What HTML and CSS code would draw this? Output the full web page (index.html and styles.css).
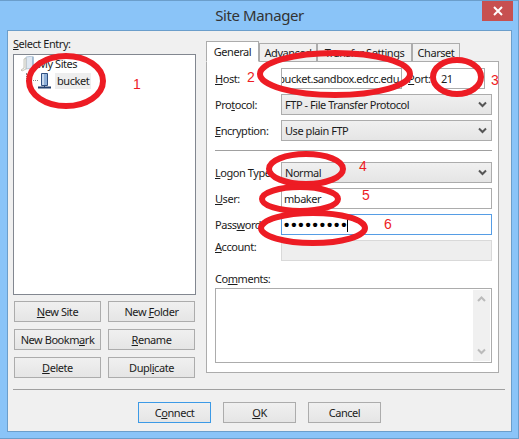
FILE: index.html
```html
<!DOCTYPE html>
<html>
<head>
  <title>Site Manager</title>
  <link rel="stylesheet" href="styles.css">
</head>
<body>
  <div class="window">
    <!-- Title bar -->
    <div class="titlebar">
      <span class="title">Site Manager</span>
      <div class="close-btn">
        <svg width="10" height="10" viewBox="0 0 10 10"><path d="M1 1L9 9M9 1L1 9" stroke="#fff" stroke-width="2"/></svg>
      </div>
    </div>

    <div class="client">
      <div class="main">
        <!-- Left column: site tree and its buttons -->
        <div class="left-col">
          <div class="select-label"><u>S</u>elect Entry:</div>
          <div class="tree">
            <div class="tree-row root-row">
              <svg class="tree-icon" width="14" height="16" viewBox="0 0 14 16">
                <path d="M5 1L12 0V12L5 13Z" fill="#dfe8f2" stroke="#a9bccf" stroke-width="0.8"/>
                <path d="M3 3L5 2V13L1 15L0 14L3 12Z" fill="#f4f4f0" stroke="#b9b9ae" stroke-width="0.8"/>
                <path d="M12 1V12" stroke="#7f9fc2"/>
              </svg>
              <span class="tree-text">My Sites</span>
            </div>
            <div class="tree-row site-row">
              <span class="tree-dots"></span>
              <svg class="tree-icon" width="13" height="16" viewBox="0 0 13 16">
                <path d="M3.5 0.5H9.5V12.5H3.5Z" fill="#8fb0d8" stroke="#2f4f80"/>
                <path d="M5 1V12" stroke="#dce8f6" stroke-width="1.5"/>
                <path d="M6.5 12.5V14" stroke="#2f4f80"/>
                <path d="M0 14.5H13" stroke="#23406e" stroke-width="2"/>
              </svg>
              <span class="tree-text selected">bucket</span>
            </div>
          </div>
          <div class="left-buttons">
            <div class="btn"><span><u>N</u>ew Site</span></div>
            <div class="btn"><span>New <u>F</u>older</span></div>
            <div class="btn"><span>New Bookm<u>a</u>rk</span></div>
            <div class="btn"><span><u>R</u>ename</span></div>
            <div class="btn"><span><u>D</u>elete</span></div>
            <div class="btn"><span>Dupl<u>i</u>cate</span></div>
          </div>
        </div>

        <!-- Right column: tabs and form -->
        <div class="right-col">
          <div class="tabs">
            <div class="tab active">General</div>
            <div class="tab tab-advanced">Advanced</div>
            <div class="tab tab-transfer">Transfer Settings</div>
            <div class="tab tab-charset">Charset</div>
          </div>
          <div class="panel">
            <div class="form-row">
              <label><u>H</u>ost:</label>
              <div class="field host"><span>bucket.sandbox.edcc.edu</span></div>
              <label class="port-label"><u>P</u>ort:</label>
              <div class="field port">21</div>
            </div>
            <div class="form-row">
              <label>Pro<u>t</u>ocol:</label>
              <div class="select"><span>FTP - File Transfer Protocol</span><svg width="9" height="7" viewBox="0 0 9 7"><path d="M1 1.5L4.5 5L8 1.5" fill="none" stroke="#555" stroke-width="2"/></svg></div>
            </div>
            <div class="form-row">
              <label><u>E</u>ncryption:</label>
              <div class="select"><span>Use plain FTP</span><svg width="9" height="7" viewBox="0 0 9 7"><path d="M1 1.5L4.5 5L8 1.5" fill="none" stroke="#555" stroke-width="2"/></svg></div>
            </div>
            <div class="form-sep"></div>
            <div class="form-row">
              <label><u>L</u>ogon Type:</label>
              <div class="select"><span>Normal</span><svg width="9" height="7" viewBox="0 0 9 7"><path d="M1 1.5L4.5 5L8 1.5" fill="none" stroke="#555" stroke-width="2"/></svg></div>
            </div>
            <div class="form-row">
              <label><u>U</u>ser:</label>
              <div class="field">mbaker</div>
            </div>
            <div class="form-row">
              <label>Pass<u>w</u>ord:</label>
              <div class="field focused"><span class="dots">•••••••••</span><span class="caret"></span></div>
            </div>
            <div class="form-row account-row">
              <label><u>A</u>ccount:</label>
              <div class="field disabled"></div>
            </div>
            <div class="comments-label">Co<u>m</u>ments:</div>
            <div class="textarea">
              <div class="scrollbar">
                <svg width="9" height="7" viewBox="0 0 9 7"><path d="M1 5L4.5 1.5L8 5" fill="none" stroke="#bbb" stroke-width="2"/></svg>
                <svg width="9" height="7" viewBox="0 0 9 7"><path d="M1 1.5L4.5 5L8 1.5" fill="none" stroke="#bbb" stroke-width="2"/></svg>
              </div>
            </div>
          </div>
        </div>
      </div>

      <div class="main-sep"></div>

      <!-- Dialog buttons -->
      <div class="footer">
        <div class="btn default-btn"><span>C<u>o</u>nnect</span></div>
        <div class="btn"><span><u>O</u>K</span></div>
        <div class="btn"><span>Cancel</span></div>
      </div>
    </div>
  </div>

  <!-- Red marks drawn over the screenshot -->
  <svg class="marks" width="519" height="439" viewBox="0 0 519 439">
    <g fill="none" stroke="#ed1c24" stroke-width="6">
      <ellipse cx="66" cy="81" rx="37" ry="25"/>
      <ellipse cx="335" cy="74" rx="75" ry="21"/>
      <ellipse cx="457" cy="77" rx="24" ry="17"/>
      <ellipse cx="306" cy="169" rx="37" ry="15"/>
      <ellipse cx="300" cy="199" rx="38" ry="12"/>
      <ellipse cx="313" cy="228" rx="52" ry="15"/>
    </g>
    <g class="mark-text">
      <text x="133" y="89">1</text>
      <text x="247" y="82">2</text>
      <text x="491" y="85">3</text>
      <text x="359" y="171">4</text>
      <text x="362" y="200">5</text>
      <text x="384" y="229">6</text>
    </g>
  </svg>
</body>
</html>
```

FILE: styles.css
```css
/* Page and window frame */
html, body {
  margin: 0;
  padding: 0;
}

body {
  width: 519px;
  height: 439px;
  overflow: hidden;
  font-family: "Noto Sans", sans-serif;
  font-size: 11px;
  letter-spacing: -0.45px;
  color: #1c1c1c;
  position: relative;
}

.window {
  box-sizing: border-box;
  width: 519px;
  height: 439px;
  padding: 0 6px 6px 7px;
  background-color: #8ac4f8;
  border: 1px solid #6b9ecb;
  border-width: 1px 1px 1px 0;
  display: flex;
  flex-direction: column;
}

/* Title bar */
.titlebar {
  height: 29px;
  flex-shrink: 0;
  display: flex;
  justify-content: center;
  align-items: center;
  position: relative;
}

.title {
  font-size: 15px;
  letter-spacing: -0.4px;
  color: #333;
  margin-bottom: 1px;
}

.close-btn {
  position: absolute;
  top: 0;
  right: -1px;
  width: 31px;
  height: 20px;
  background-color: #c75050;
  display: flex;
  align-items: center;
  justify-content: center;
}

.client {
  flex: 1;
  box-sizing: border-box;
  background-color: #f0f0f0;
  border: 1px solid #6b9ecb;
  padding: 10px 6px 0 5px;
}

.main {
  display: flex;
  height: 342px;
}

/* Left column */
.left-col {
  width: 193px;
  flex-shrink: 0;
}

.select-label {
  height: 13px;
  line-height: 13px;
  margin-top: -4px;
  margin-bottom: 4px;
}

.tree {
  box-sizing: border-box;
  width: 183px;
  height: 241px;
  background-color: #fff;
  border: 1px solid #828790;
  padding: 1px 0 0 7px;
}

.tree-row {
  display: flex;
  align-items: center;
  height: 16px;
}

.root-row {
  gap: 3px;
}

.site-row {
  margin-top: 1px;
  padding-left: 5px;
  position: relative;
}

.tree-dots {
  width: 12px;
  height: 8px;
  margin-bottom: 8px;
  border-left: 1px dotted #888;
  border-bottom: 1px dotted #888;
  box-sizing: border-box;
}

.tree-text {
  line-height: 16px;
}

.selected {
  background-color: #eee;
  margin-left: 4px;
  padding: 0 2px 0 2px;
}

.left-buttons {
  display: grid;
  grid-template-columns: 87px 87px;
  column-gap: 7px;
  row-gap: 7px;
  margin: 6px 0 0 1px;
}

/* Buttons */
.btn {
  box-sizing: border-box;
  height: 21px;
  border: 1px solid #acacac;
  background: linear-gradient(#f0f0f0, #e5e5e5);
  display: flex;
  align-items: center;
  justify-content: center;
}

.default-btn {
  border-color: #3c9ae6;
}

/* Right column */
.right-col {
  width: 293px;
}

.tabs {
  display: flex;
  align-items: flex-end;
  height: 20px;
}

.tab {
  box-sizing: border-box;
  height: 18px;
  line-height: 17px;
  background-color: #f0f0f0;
  border: 1px solid #acacac;
  border-bottom: none;
  text-align: center;
}

.tab.active {
  width: 53px;
  height: 21px;
  line-height: 19px;
  background-color: #fff;
  border-bottom: 1px solid #fff;
  position: relative;
  z-index: 1;
  margin-bottom: -1px;
}

.tab-advanced {
  width: 58px;
}

.tab-transfer {
  width: 95px;
}

.tab-charset {
  width: 48px;
}

.panel {
  box-sizing: border-box;
  height: 312px;
  background-color: #fff;
  border: 1px solid #acacac;
  padding: 6px 6px 0 8px;
}

.form-row {
  display: flex;
  align-items: center;
  height: 21px;
  margin-bottom: 5px;
}

.form-row label {
  width: 66px;
  flex-shrink: 0;
}

.account-row label {
  margin-bottom: 8px;
}

.port-label {
  width: 33px !important;
  padding-left: 6px;
  box-sizing: border-box;
}

.field {
  box-sizing: border-box;
  flex: 1;
  height: 21px;
  line-height: 18px;
  border: 1px solid #acacac;
  padding: 0 2px;
  background-color: #fff;
  display: flex;
  align-items: center;
  overflow: hidden;
}

.host {
  flex: none;
  width: 121px;
  justify-content: flex-end;
  white-space: nowrap;
}

.port {
  flex: none;
  width: 50px;
  padding-left: 5px;
}

.focused {
  border-color: #569de5;
}

.disabled {
  background-color: #eee;
  border-color: #d9d9d9;
}

.dots {
  font-family: "Liberation Sans", sans-serif;
  font-size: 15px;
  font-weight: bold;
  letter-spacing: 1.9px;
  color: #000;
}

.caret {
  width: 1px;
  height: 15px;
  background-color: #000;
  margin-left: -1px;
}

.select {
  box-sizing: border-box;
  flex: 1;
  height: 21px;
  border: 1px solid #acacac;
  background: linear-gradient(#f0f0f0, #e5e5e5);
  padding: 0 4px 0 3px;
  display: flex;
  align-items: center;
  justify-content: space-between;
}

.form-sep {
  height: 1px;
  background-color: #a0a0a0;
  margin: 9px 0 11px;
}

.comments-label {
  margin-top: 11px;
  height: 16px;
  line-height: 14px;
}

.textarea {
  box-sizing: border-box;
  height: 75px;
  border: 1px solid #acacac;
  background-color: #fff;
  padding: 1px;
  display: flex;
  justify-content: flex-end;
}

.scrollbar {
  width: 17px;
  background-color: #f0f0f0;
  display: flex;
  flex-direction: column;
  justify-content: space-between;
  align-items: center;
  padding: 6px 0;
  box-sizing: border-box;
}

/* Bottom of the dialog */
.main-sep {
  height: 1px;
  background-color: #a0a0a0;
  width: 492px;
  margin-top: 6px;
}

.footer {
  display: flex;
  gap: 12px;
  padding: 12px 0 0 125px;
}

.footer .btn {
  width: 73px;
}

/* Red annotations on top */
.marks {
  position: absolute;
  top: 0;
  left: 0;
}

.mark-text {
  font-family: "Liberation Sans", sans-serif;
  font-size: 14px;
  fill: #ed1c24;
}
```
